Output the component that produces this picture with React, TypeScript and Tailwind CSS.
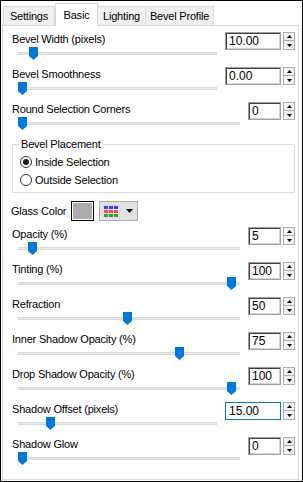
import React from "react";

const FONT = { fontFamily: "'Liberation Sans', Arial, sans-serif" };

function Thumb() {
  return (
    <svg width="9" height="13" viewBox="0 0 9 13" className="block">
      <path d="M0 0 H9 V9 L4.5 13 L0 9 Z" fill="#0078d7" />
    </svg>
  );
}

function SpinBox({ value, wide, focused }: { value: string; wide?: boolean; focused?: boolean }) {
  return (
    <div className="flex items-start gap-[2px]">
      <div
        className={
          (wide ? "w-[56px] " : "w-[33px] ") +
          "h-[18px] bg-white flex items-center pl-[3px] text-[12px] text-black " +
          (focused
            ? "border border-[#0078d7]"
            : "border border-[#a0a0a0] shadow-[inset_1px_1px_0_#404040,inset_-1px_-1px_0_#d4d4d4]")
        }
      >
        <span className="leading-[14px]">{value}</span>
      </div>
      <div className="flex flex-col w-[12px] h-[18px]">
        <div className="h-[9px] border border-[#adadad] bg-[#f3f3f3] flex items-center justify-center">
          <svg width="5" height="3" viewBox="0 0 5 3">
            <path d="M0 3 L2.5 0 L5 3 Z" fill="#000" />
          </svg>
        </div>
        <div className="h-[9px] border border-t-0 border-[#adadad] bg-[#f3f3f3] flex items-center justify-center">
          <svg width="5" height="3" viewBox="0 0 5 3">
            <path d="M0 0 L5 0 L2.5 3 Z" fill="#000" />
          </svg>
        </div>
      </div>
    </div>
  );
}

function SliderRow({
  label,
  value,
  thumb,
  wide,
  focused,
}: {
  label: string;
  value: string;
  thumb: number;
  wide?: boolean;
  focused?: boolean;
}) {
  return (
    <div className="h-[35px] flex items-start">
      <div className="flex-1 flex flex-col pr-[8px]">
        <div className="h-[14px] leading-[14px] text-[11px] tracking-[-0.2px] text-black whitespace-nowrap">{label}</div>
        <div className="relative h-[13px] ml-[6px] mt-[1px]">
          <div className="absolute left-0 right-0 top-[5px] h-[3px] bg-[#e7e7e7] border-y border-[#dadada]" />
          <div className="absolute top-0" style={{ left: thumb }}>
            <Thumb />
          </div>
        </div>
      </div>
      <SpinBox value={value} wide={wide} focused={focused} />
    </div>
  );
}

function Radio({ checked, label }: { checked?: boolean; label: string }) {
  return (
    <div className="h-[18px] flex items-center gap-[3px]">
      <div className="w-[12px] h-[12px] rounded-full border border-[#333] bg-white flex items-center justify-center">
        {checked && <div className="w-[6px] h-[6px] rounded-full bg-[#1a1a1a]" />}
      </div>
      <span className="text-[11px] tracking-[-0.2px] leading-[14px] text-black">{label}</span>
    </div>
  );
}

export default function App() {
  return (
    <div
      className="w-[303px] h-[482px] bg-white border border-black flex flex-col overflow-hidden"
      style={FONT}
    >
      {/* Tabs */}
      <div className="h-[24px] flex items-end pl-[2px] relative z-10 text-[11px] tracking-[-0.2px] text-black">
        <div className="w-[52px] h-[19px] bg-[#f0f0f0] border border-b-0 border-[#d9d9d9] flex items-center justify-center">
          Settings
        </div>
        <div className="w-[43px] h-[23px] bg-white border border-b-0 border-[#d9d9d9] flex items-start justify-center pt-[3px] -mb-[1px]">
          Basic
        </div>
        <div className="w-[48px] h-[19px] bg-[#f0f0f0] border border-b-0 border-l-0 border-[#d9d9d9] flex items-center justify-center">
          Lighting
        </div>
        <div className="w-[68px] h-[19px] bg-[#f0f0f0] border border-b-0 border-l-0 border-[#d9d9d9] flex items-center justify-center">
          Bevel Profile
        </div>
      </div>
      {/* Panel */}
      <div className="flex-1 ml-[1px] mr-[3px] mb-[1px] border border-[#d9d9d9] bg-white pl-[9px] pr-[3px] pt-[6px]">
        <SliderRow label="Bevel Width (pixels)" value="10.00" thumb={11} wide />
        <SliderRow label="Bevel Smoothness" value="0.00" thumb={0} wide />
        <SliderRow label="Round Selection Corners" value="0" thumb={0} />

        {/* Group box */}
        <div className="relative mt-[7px] h-[49px] border border-[#dcdcdc]">
          <div className="absolute -top-[8px] left-[6px] bg-white px-[2px] text-[11px] tracking-[-0.2px] leading-[14px] text-black">
            Bevel Placement
          </div>
          <div className="pl-[7px] pt-[8px] flex flex-col">
            <Radio checked label="Inside Selection" />
            <Radio label="Outside Selection" />
          </div>
        </div>

        {/* Glass Color */}
        <div className="h-[34px] flex items-center pt-[2px]">
          <span className="text-[11px] tracking-[-0.2px] leading-[14px] text-black w-[60px] -ml-[1px]">Glass Color</span>
          <div className="w-[23px] h-[20px] border border-black bg-[#ababab] shadow-[inset_0_0_0_1px_#ffffff]" />
          <div className="ml-[5px] w-[39px] h-[20px] border border-[#adadad] bg-[#e1e1e1] flex items-center pl-[4px]">
            <div className="grid grid-cols-3 gap-[1px]">
              {[
                "#3b3bff", "#3b3bff", "#3b3bff",
                "#ff4a4a", "#ff4a4a", "#ff4a4a",
                "#2e9e3a", "#2e9e3a", "#2e9e3a",
              ].map((c, i) => (
                <div key={i} className="w-[4px] h-[3px]" style={{ background: c }} />
              ))}
            </div>
            <svg width="7" height="4" viewBox="0 0 7 4" className="ml-[8px]">
              <path d="M0 0 H7 L3.5 4 Z" fill="#000" />
            </svg>
          </div>
        </div>

        <SliderRow label="Opacity (%)" value="5" thumb={10} />
        <SliderRow label="Tinting (%)" value="100" thumb={209} />
        <SliderRow label="Refraction" value="50" thumb={105} />
        <SliderRow label="Inner Shadow Opacity (%)" value="75" thumb={157} />
        <SliderRow label="Drop Shadow Opacity (%)" value="100" thumb={209} />
        <SliderRow label="Shadow Offset (pixels)" value="15.00" thumb={28} wide focused />
        <SliderRow label="Shadow Glow" value="0" thumb={0} />
      </div>
    </div>
  );
}
